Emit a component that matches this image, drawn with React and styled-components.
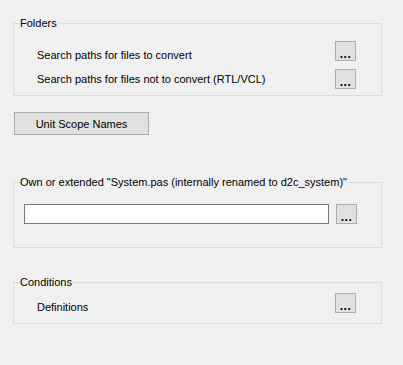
import React from 'react';
import styled, { createGlobalStyle } from 'styled-components';

const GlobalStyle = createGlobalStyle`
    html, body {
        margin: 0;
        padding: 0;
        background: #f0f0f0;
    }
    body {
        font-family: "Liberation Sans", Arial, sans-serif;
        font-size: 11px;
        color: #000;
    }
`;

const Page = styled.div`
    width: 403px;
    height: 365px;
    box-sizing: border-box;
    padding: 17px 0 0 13px;
    overflow: hidden;
`;

const Group = styled.fieldset`
    width: 369px;
    box-sizing: border-box;
    margin: ${props => props.$top || 0}px 0 0 0;
    padding: 0;
    min-width: 0;
    border: 1px solid #dcdcdc;
`;

const Legend = styled.legend`
    margin-left: 6px;
    padding: 0;
    font-size: 11px;
    line-height: 13px;
    height: 13px;
`;

const GroupBody = styled.div`
    display: flex;
    flex-direction: column;
    gap: ${props => props.$gap || 0}px;
    padding: ${props => props.$pad};
`;

const Row = styled.div`
    display: flex;
    align-items: center;
    justify-content: space-between;
    height: 20px;
`;

const Label = styled.span`
    padding-top: ${props => (props.$drop ? 8 : 0)}px;
    white-space: nowrap;
`;

const EllipsisButton = styled.button`
    width: 21px;
    height: 20px;
    box-sizing: border-box;
    margin: 0;
    padding: 5px 0 0 0;
    border: 1px solid #adadad;
    background: #e1e1e1;
    font-family: "Liberation Sans", Arial, sans-serif;
    font-size: 12px;
    font-weight: bold;
    line-height: 12px;
    letter-spacing: 0.5px;
    color: #000;
    text-align: center;
`;

const PushButton = styled.button`
    display: block;
    width: 135px;
    height: 23px;
    box-sizing: border-box;
    margin: 16px 0 0 1px;
    padding: 0;
    border: 1px solid #adadad;
    background: #e1e1e1;
    font-family: "Liberation Sans", Arial, sans-serif;
    font-size: 11px;
    color: #000;
`;

const EditRow = styled.div`
    display: flex;
    align-items: center;
    gap: 7px;
`;

const Edit = styled.input`
    width: 305px;
    height: 20px;
    box-sizing: border-box;
    margin: 0;
    padding: 0 3px;
    border: 1px solid #7a7a7a;
    background: #fff;
    font-family: "Liberation Sans", Arial, sans-serif;
    font-size: 11px;
    outline: none;
`;

export default function App() {
    return (
        <Page>
            <GlobalStyle />
            <Group>
                <Legend>Folders</Legend>
                <GroupBody $gap={8} $pad="11px 25px 6px 23px">
                    <Row>
                        <Label $drop>Search paths for files to convert</Label>
                        <EllipsisButton>...</EllipsisButton>
                    </Row>
                    <Row>
                        <Label>Search paths for files not to convert (RTL/VCL)</Label>
                        <EllipsisButton>...</EllipsisButton>
                    </Row>
                </GroupBody>
            </Group>

            <PushButton>Unit Scope Names</PushButton>

            <Group $top={41}>
                <Legend>Own or extended "System.pas (internally renamed to d2c_system)"</Legend>
                <GroupBody $pad="15px 24px 23px 10px">
                    <EditRow>
                        <Edit type="text" />
                        <EllipsisButton>...</EllipsisButton>
                    </EditRow>
                </GroupBody>
            </Group>

            <Group $top={28}>
                <Legend>Conditions</Legend>
                <GroupBody $pad="4px 25px 10px 23px">
                    <Row>
                        <Label $drop>Definitions</Label>
                        <EllipsisButton>...</EllipsisButton>
                    </Row>
                </GroupBody>
            </Group>
        </Page>
    );
}
